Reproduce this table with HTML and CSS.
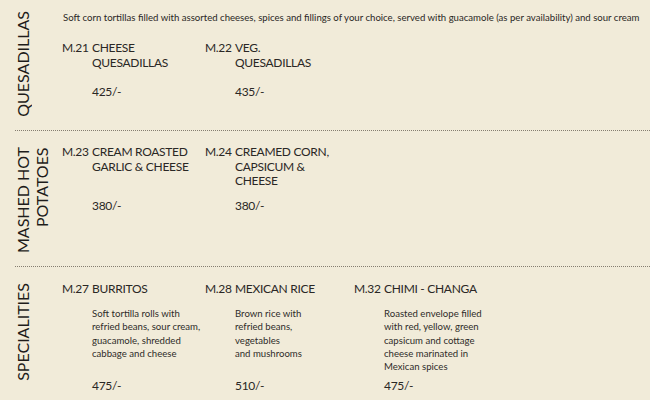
FILE: index.html
```html
<!DOCTYPE html>
<html>
<head>
<meta charset="utf-8">
<link rel="stylesheet" href="styles.css">
</head>
<body>
<div class="menu">
  <section class="sec sec-q">
    <div class="label">QUESADILLAS</div>
    <div class="content">
      <p class="intro">Soft corn tortillas filled with assorted cheeses, spices and fillings of your choice, served with guacamole (as per availability) and sour cream</p>
      <div class="items">
        <div class="item">
          <span class="code">M.21</span>
          <div class="body">
            <div class="head"><div class="name">CHEESE<br>QUESADILLAS</div></div>
            <div class="price">425/-</div>
          </div>
        </div>
        <div class="item">
          <span class="code">M.22</span>
          <div class="body">
            <div class="head"><div class="name">VEG.<br>QUESADILLAS</div></div>
            <div class="price">435/-</div>
          </div>
        </div>
      </div>
    </div>
  </section>
  <section class="sec sec-m">
    <div class="label">MASHED HOT<br>POTATOES</div>
    <div class="content">
      <div class="items">
        <div class="item">
          <span class="code">M.23</span>
          <div class="body">
            <div class="head"><div class="name">CREAM ROASTED<br>GARLIC &amp; CHEESE</div></div>
            <div class="price">380/-</div>
          </div>
        </div>
        <div class="item">
          <span class="code">M.24</span>
          <div class="body">
            <div class="head"><div class="name">CREAMED CORN,<br>CAPSICUM &amp;<br>CHEESE</div></div>
            <div class="price">380/-</div>
          </div>
        </div>
      </div>
    </div>
  </section>
  <section class="sec sec-s">
    <div class="label">SPECIALITIES</div>
    <div class="content">
      <div class="items">
        <div class="item">
          <span class="code">M.27</span>
          <div class="body">
            <div class="head">
              <div class="name">BURRITOS</div>
              <p class="desc">Soft tortilla rolls with<br>refried beans, sour cream,<br>guacamole, shredded<br>cabbage and cheese</p>
            </div>
            <div class="price">475/-</div>
          </div>
        </div>
        <div class="item">
          <span class="code">M.28</span>
          <div class="body">
            <div class="head">
              <div class="name">MEXICAN RICE</div>
              <p class="desc">Brown rice with<br>refried beans,<br>vegetables<br>and mushrooms</p>
            </div>
            <div class="price">510/-</div>
          </div>
        </div>
        <div class="item">
          <span class="code">M.32</span>
          <div class="body">
            <div class="head">
              <div class="name">CHIMI - CHANGA</div>
              <p class="desc">Roasted envelope filled<br>with red, yellow, green<br>capsicum and cottage<br>cheese marinated in<br>Mexican spices</p>
            </div>
            <div class="price">475/-</div>
          </div>
        </div>
      </div>
    </div>
  </section>
</div>
</body>
</html>
```
FILE: styles.css
```css
html, body {
  margin: 0;
  padding: 0;
  background: #f1ebd9;
}
body {
  width: 650px;
  height: 400px;
  overflow: hidden;
  font-family: Lato, "Noto Sans", sans-serif;
  color: #2a2725;
}
.menu {
  padding-left: 15px;
}
.sec {
  display: flex;
  align-items: flex-start;
  border-bottom: 1px dotted #857d70;
  box-sizing: border-box;
}
.sec-q { height: 131px; }
.sec-m { height: 136px; }
.sec-s { height: 140px; border-bottom: none; }

.label {
  writing-mode: vertical-rl;
  transform: rotate(180deg);
  text-align: end;
  font-size: 16px;
  line-height: 19px;
  margin-left: -2px;
  width: 49px;
  flex: none;
  align-self: flex-start;
  color: #1e1c1a;
}
.sec-q .label { margin-top: 11px; }
.sec-m .label { margin-top: 16px; }
.sec-s .label { margin-top: 16px; }

.content {
  flex: 1;
}
.intro {
  margin: 11px 0 0 1px;
  font-size: 9.6px;
  line-height: 13.3px;
  white-space: nowrap;
}
.items {
  display: grid;
  grid-template-columns: 143px 149px auto;
}
.sec-q .items { margin-top: 17px; }
.sec-m .items { margin-top: 14px; }
.sec-s .items { margin-top: 15px; }

.item {
  display: flex;
  font-size: 12px;
  line-height: 14.5px;
  letter-spacing: -0.3px;
}
.code {
  width: 30px;
  flex: none;
}
.sec-q .head { height: 44px; }
.sec-m .head { height: 54px; }
.sec-s .head { height: 97px; }
.desc {
  margin: 10.5px 0 0 0;
  font-size: 9.6px;
  line-height: 13.3px;
  letter-spacing: 0;
  color: #2f2c29;
}
.price {
  font-size: 12px;
}
```
